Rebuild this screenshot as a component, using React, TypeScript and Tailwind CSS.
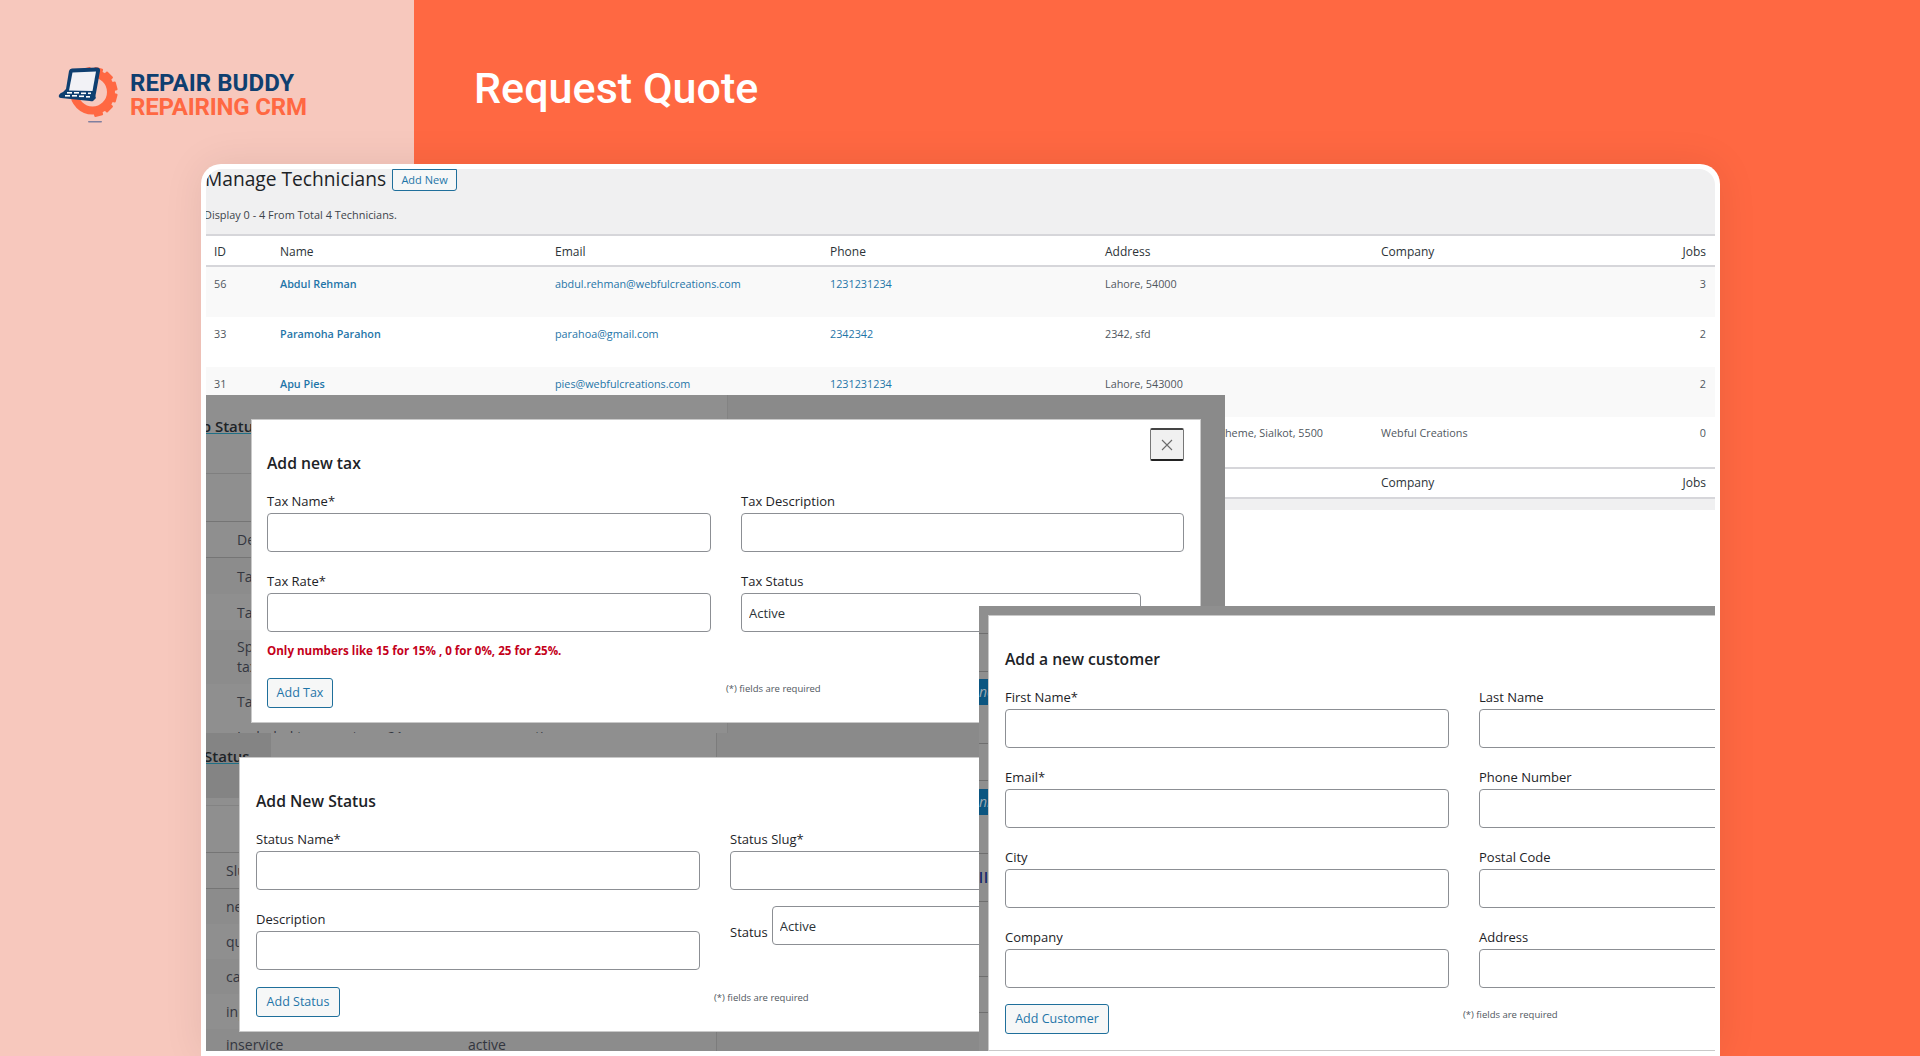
import React from "react";

const font = { fontFamily: '"Open Sans", "Noto Sans", sans-serif' };

function Logo() {
  return (
    <svg width="80" height="70" viewBox="0 0 80 70" className="shrink-0">
      <g fill="#ff6842">
        {[-45, -15, 15, 45, 75, 105, 135, 165].map((a) => (
          <rect key={a} x="38" y="7" width="9" height="9" rx="1" transform={`rotate(${a} 42.5 32)`} />
        ))}
      </g>
      <circle cx="42.5" cy="32" r="18.5" fill="none" stroke="#ff6842" strokeWidth="8" />
      <path d="M19 11 Q19.5 8.5 22 8.5 L47 7.5 Q50.5 7.5 50 11 L46 33 Q45 37 46 38 L43 41 Q42 41.5 40 41 L11 38 Q8 37.5 9 35 Q10 33 13 32 L16 29 Z" fill="#0f3f70" />
      <path d="M22.5 12.5 L46 11.5 L42.5 31 L19 30.5 Z" fill="#f2f2f6" />
      <g fill="#ffffff">
        <rect x="17" y="32" width="5" height="1.6" />
        <rect x="24" y="32" width="5" height="1.6" />
        <rect x="31" y="32.5" width="5" height="1.6" />
        <rect x="38" y="32.5" width="3" height="1.6" />
        <rect x="15" y="35" width="5" height="1.6" />
        <rect x="22" y="35" width="5" height="1.6" />
        <rect x="29" y="35.5" width="5" height="1.6" />
        <rect x="36" y="36" width="4" height="1.6" />
      </g>
      <rect x="38" y="61" width="14" height="1.6" rx="0.8" fill="#7f7f9f" />
    </svg>
  );
}

function Field({ label }: { label: string }) {
  return (
    <div className="flex flex-col">
      <div className="h-[22px] text-[13px] leading-[20px] text-[#1d2327]" style={font}>{label}</div>
      <input readOnly className="h-[39px] w-full rounded-[4px] border border-[#8c8f94] bg-white" />
    </div>
  );
}

function SelectBox() {
  return (
    <input
      readOnly
      value="Active"
      className="h-[39px] w-[400px] rounded-[4px] border border-[#8c8f94] bg-white px-[7px] text-[13px] text-[#2c3338]"
      style={font}
    />
  );
}

function Title({ children }: { children: React.ReactNode }) {
  return <div className="h-[24px] text-[15.7px] font-semibold leading-[24px] text-[#1d2327]" style={font}>{children}</div>;
}

function AddButton({ children, width }: { children: React.ReactNode; width: string }) {
  return (
    <button className={`h-[30px] ${width} rounded-[3px] border border-[#1f6f9b] bg-[#f6f7f7] text-[12.5px] text-[#1f75a8]`} style={font}>
      {children}
    </button>
  );
}

function Note() {
  return <div className="pt-[4px] text-[9.5px] leading-[14px] text-[#50575e]" style={font}>(*) fields are required</div>;
}

const columns = "grid grid-cols-[66px_275px_275px_275px_276px_1fr_100px]";

function HeaderRow({ className }: { className: string }) {
  return (
    <div className={`${columns} bg-white text-[12px] text-[#2c3338] ${className}`} style={font}>
      <div className="pl-[8px]">ID</div>
      <div className="pl-[8px]">Name</div>
      <div className="pl-[8px]">Email</div>
      <div className="pl-[8px]">Phone</div>
      <div className="pl-[8px]">Address</div>
      <div className="pl-[8px]">Company</div>
      <div className="pr-[9px] text-right">Jobs</div>
    </div>
  );
}

const rows = [
  { id: "56", name: "Abdul Rehman", email: "abdul.rehman@webfulcreations.com", phone: "1231231234", address: "Lahore, 54000", company: "", jobs: "3", bg: "bg-[#f9f9f9]", pad: "pt-[8px]" },
  { id: "33", name: "Paramoha Parahon", email: "parahoa@gmail.com", phone: "2342342", address: "2342, sfd", company: "", jobs: "2", bg: "bg-white", pad: "pt-[8px]" },
  { id: "31", name: "Apu Pies", email: "pies@webfulcreations.com", phone: "1231231234", address: "Lahore, 543000", company: "", jobs: "2", bg: "bg-[#f9f9f9]", pad: "pt-[8px]" },
  { id: "28", name: "Sam Wilson", email: "sam@webfulcreations.com", phone: "1231231234", address: "Model Town Housing Scheme, Sialkot, 5500", company: "Webful Creations", jobs: "0", bg: "bg-white", pad: "pt-[7px]" },
];

function DimRow({ h, pl, children, border, shade }: { h: string; pl: string; children?: React.ReactNode; border?: boolean; shade?: boolean }) {
  return (
    <div className={`${h} ${pl} flex items-center whitespace-nowrap text-[14px] text-[#33363f] ${border ? "border-b border-[#757575]" : ""} ${shade ? "bg-[#8c8c8c]" : ""}`} style={font}>
      {children}
    </div>
  );
}

export default function App() {
  return (
    <div className="relative h-[1056px] w-[1920px] overflow-hidden bg-[#ff6842]">
      <div className="absolute inset-y-0 left-0 w-[414px] bg-[#f7c8bd]" />

      <header className="relative flex h-[164px] items-start">
        <div className="flex w-[474px] items-start pl-[50px] pt-[60px]">
          <Logo />
          <div className="pt-[11px]" style={{ fontFamily: "Roboto, sans-serif" }}>
            <div className="text-[24px] font-bold leading-[24px] tracking-[0.05px] text-[#0f3f70]">REPAIR BUDDY</div>
            <div className="text-[24px] font-bold leading-[24px] tracking-[-0.2px] text-[#ff6842]">REPAIRING CRM</div>
          </div>
        </div>
        <h1 className="pt-[59px] text-[43px] font-medium leading-[58px] tracking-[0.05px] text-white" style={{ fontFamily: "Roboto, sans-serif" }}>
          Request Quote
        </h1>
      </header>

      <main className="relative ml-[201px] h-[892px] w-[1519px] rounded-t-[20px] bg-white pl-[5px] pr-[5px] pt-[5px] shadow-[0_0_40px_rgba(0,0,0,0.08)]">
        <div className="relative h-[882px] overflow-hidden rounded-t-[16px]">
          <div className="h-[65px] bg-[#f0f0f1]">
            <div className="flex h-[22px] items-center">
              <div className="ml-[-1px] mt-[-2px] text-[19.2px] leading-[22px] text-[#1d2327]" style={font}>Manage Technicians</div>
              <button className="ml-[6px] h-[22px] w-[65px] rounded-b-[3px] border border-[#1f6f9b] bg-[#f6f7f7] text-[11px] text-[#1f75a8]" style={font}>Add New</button>
            </div>
            <div className="ml-[-2px] mt-[15px] text-[10.9px] leading-[18px] text-[#3c434a]" style={font}>Display 0 - 4 From Total 4 Technicians.</div>
          </div>

          <HeaderRow className="h-[33px] items-center border-y-2 border-[#d6d6da] pt-[2px]" />
          {rows.map((r) => (
            <div key={r.id} className={`${columns} h-[50px] ${r.pad} whitespace-nowrap text-[10.8px] leading-[18px] text-[#50575e] ${r.bg}`} style={font}>
              <div className="pl-[8px]">{r.id}</div>
              <div className="pl-[8px] font-semibold text-[#1f75a8]">{r.name}</div>
              <div className="pl-[8px] text-[#1f75a8]">{r.email}</div>
              <div className="pl-[8px] text-[#1f75a8]">{r.phone}</div>
              <div className="pl-[8px]">{r.address}</div>
              <div className="pl-[8px]">{r.company}</div>
              <div className="pr-[9px] text-right">{r.jobs}</div>
            </div>
          ))}
          <HeaderRow className="h-[32px] items-center border-y-2 border-[#d6d6da]" />
          <div className="h-[11px] bg-[#f0f0f1]" />

          {/* Tax dialog backdrop */}
          <section className="absolute left-0 top-[226px] flex h-[338px] w-[1019px] bg-[#8f8f8f]">
            <div className="w-[522px] overflow-hidden border-r border-[#838383]">
              <div className="h-[79px] border-b border-[#7f7f7f] pt-[19px]">
                <span className="ml-[-18px] text-[15px] font-semibold leading-[22px] text-[#1d2327] underline decoration-[#1f6f85]" style={font}>Job Status</span>
              </div>
              <div className="h-[48px] border-b border-[#757575]" />
              <DimRow h="h-[36px]" pl="pl-[31px]" border>Description</DimRow>
              <DimRow h="h-[36px]" pl="pl-[31px]" shade>Tax one</DimRow>
              <DimRow h="h-[36px]" pl="pl-[31px]">Tax two</DimRow>
              <div className="h-[54px] bg-[#8c8c8c] pl-[31px] pt-[7px] text-[14px] leading-[20px] text-[#33363f]" style={font}>Special<br />tax</div>
              <DimRow h="h-[35px]" pl="pl-[31px]">Tax three</DimRow>
              <div className="flex gap-[22px] overflow-hidden whitespace-nowrap pl-[31px] text-[14px] leading-[36px] text-[#33363f]" style={font}>
                <span>Included tax</span><span>rate</span><span>21</span><span className="ml-[95px]">active</span>
              </div>
            </div>
            <div className="flex-1 bg-[#8a8a8a]" />
            <div className="absolute left-[45px] top-[24px] h-[304px] w-[950px] border border-[#c9c9c9] bg-white pl-[15px] pt-[31px]">
              <button className="absolute right-[16px] top-[8px] flex h-[33px] w-[34px] items-center justify-center rounded-[2px] border border-b-2 border-t-2 border-[#767676] border-b-[#222] border-t-[#444] bg-[#f0f0f0] text-[#6b6b6b]">
                <svg width="14" height="14" viewBox="0 0 14 14" fill="none" stroke="currentColor" strokeWidth="1.1"><path d="M2 2 L12 12 M12 2 L2 12" /></svg>
              </button>
              <Title>Add new tax</Title>
              <div className="mt-[16px] grid grid-cols-[444px_443px] gap-x-[30px] gap-y-[19px]">
                <Field label="Tax Name*" />
                <Field label="Tax Description" />
                <Field label="Tax Rate*" />
                <div className="flex flex-col">
                  <div className="h-[22px] text-[13px] leading-[20px] text-[#1d2327]" style={font}>Tax Status</div>
                  <SelectBox />
                </div>
              </div>
              <div className="mt-[10px] h-[18px] text-[11.6px] font-bold leading-[18px] text-[#c4001a]" style={font}>Only numbers like 15 for 15% , 0 for 0%, 25 for 25%.</div>
              <div className="mt-[18px] flex items-start">
                <div className="w-[459px]"><AddButton width="w-[66px]">Add Tax</AddButton></div>
                <Note />
              </div>
            </div>
          </section>

          {/* Status dialog backdrop */}
          <section className="absolute left-0 top-[564px] flex h-[318px] w-[1019px] bg-[#8f8f8f]">
            <div className="absolute left-0 top-0 h-[65px] w-[65px] bg-[#848484]" />
            <div className="relative w-[511px] overflow-hidden border-r border-[#7c7c7c]">
              <div className="h-[73px] border-b border-[#838383] pt-[11px]">
                <span className="ml-[-2px] text-[15px] font-semibold leading-[22px] text-[#1d2327] underline decoration-[#1f6f85]" style={font}>Status</span>
              </div>
              <div className="h-[47px] border-b border-[#757575]" />
              <DimRow h="h-[36px]" pl="pl-[20px]" border>Slug</DimRow>
              <DimRow h="h-[35px]" pl="pl-[20px]" shade>new</DimRow>
              <DimRow h="h-[35px]" pl="pl-[20px]">quote</DimRow>
              <DimRow h="h-[35px]" pl="pl-[20px]" shade>cancelled</DimRow>
              <DimRow h="h-[35px]" pl="pl-[20px]">inprocess</DimRow>
              <div className="flex h-[30px] items-center whitespace-nowrap bg-[#8c8c8c] pl-[20px] text-[14px] text-[#33363f]" style={font}>
                <span className="w-[242px]">inservice</span><span>active</span>
              </div>
            </div>
            <div className="flex-1 bg-[#8a8a8a]" />
            <div className="absolute left-[33px] top-[24px] h-[275px] w-[950px] border border-[#c9c9c9] bg-white pl-[16px] pt-[31px]">
              <Title>Add New Status</Title>
              <div className="mt-[16px] grid grid-cols-[444px_443px] gap-x-[30px] gap-y-[19px]">
                <Field label="Status Name*" />
                <Field label="Status Slug*" />
                <Field label="Description" />
                <div className="mt-[-3px] flex items-start gap-[4px]">
                  <span className="mt-[16px] text-[13px] leading-[20px] text-[#1d2327]" style={font}>Status</span>
                  <SelectBox />
                </div>
              </div>
              <div className="mt-[17px] flex items-start">
                <div className="w-[458px]"><AddButton width="w-[84px]">Add Status</AddButton></div>
                <Note />
              </div>
            </div>
          </section>

          {/* Customer dialog backdrop */}
          <section className="absolute left-[773px] top-[437px] flex h-[445px] w-[737px] bg-[#8f8f8f]">
            <div className="w-[9px] shrink-0 overflow-hidden text-[14px]" style={font}>
              <div className="h-[28px] border-b border-[#6f6f6f]" />
              <div className="h-[38px] border-b border-[#6f6f6f]" />
              <div className="mt-[7px] h-[26px] overflow-hidden bg-[#0b5580] italic leading-[26px] text-[#9aa7b0]">ne</div>
              <div className="h-[39px] border-b border-[#6f6f6f]" />
              <div className="h-[37px] border-b border-[#6f6f6f]" />
              <div className="mt-[8px] h-[26px] overflow-hidden bg-[#0b5580] italic leading-[26px] text-[#9aa7b0]">ni</div>
              <div className="h-[39px] border-b border-[#6f6f6f]" />
              <div className="flex h-[48px] items-center border-b border-[#6f6f6f] font-semibold text-[#10206a]"><span className="tracking-[1px]">ll</span></div>
              <div className="h-[75px] border-b border-[#6f6f6f]" />
              <div className="h-[36px] border-b border-[#6f6f6f]" />
            </div>
            <div className="mt-[9px] h-[436px] w-[950px] shrink-0 border border-[#c9c9c9] bg-white pl-[16px] pt-[31px]">
              <Title>Add a new customer</Title>
              <div className="mt-[16px] grid grid-cols-[444px_443px] gap-x-[30px] gap-y-[19px]">
                <Field label="First Name*" />
                <Field label="Last Name" />
                <Field label="Email*" />
                <Field label="Phone Number" />
                <Field label="City" />
                <Field label="Postal Code" />
                <Field label="Company" />
                <Field label="Address" />
              </div>
              <div className="mt-[16px] flex items-start">
                <div className="w-[458px]"><AddButton width="w-[104px]">Add Customer</AddButton></div>
                <Note />
              </div>
            </div>
          </section>
        </div>
      </main>
    </div>
  );
}
